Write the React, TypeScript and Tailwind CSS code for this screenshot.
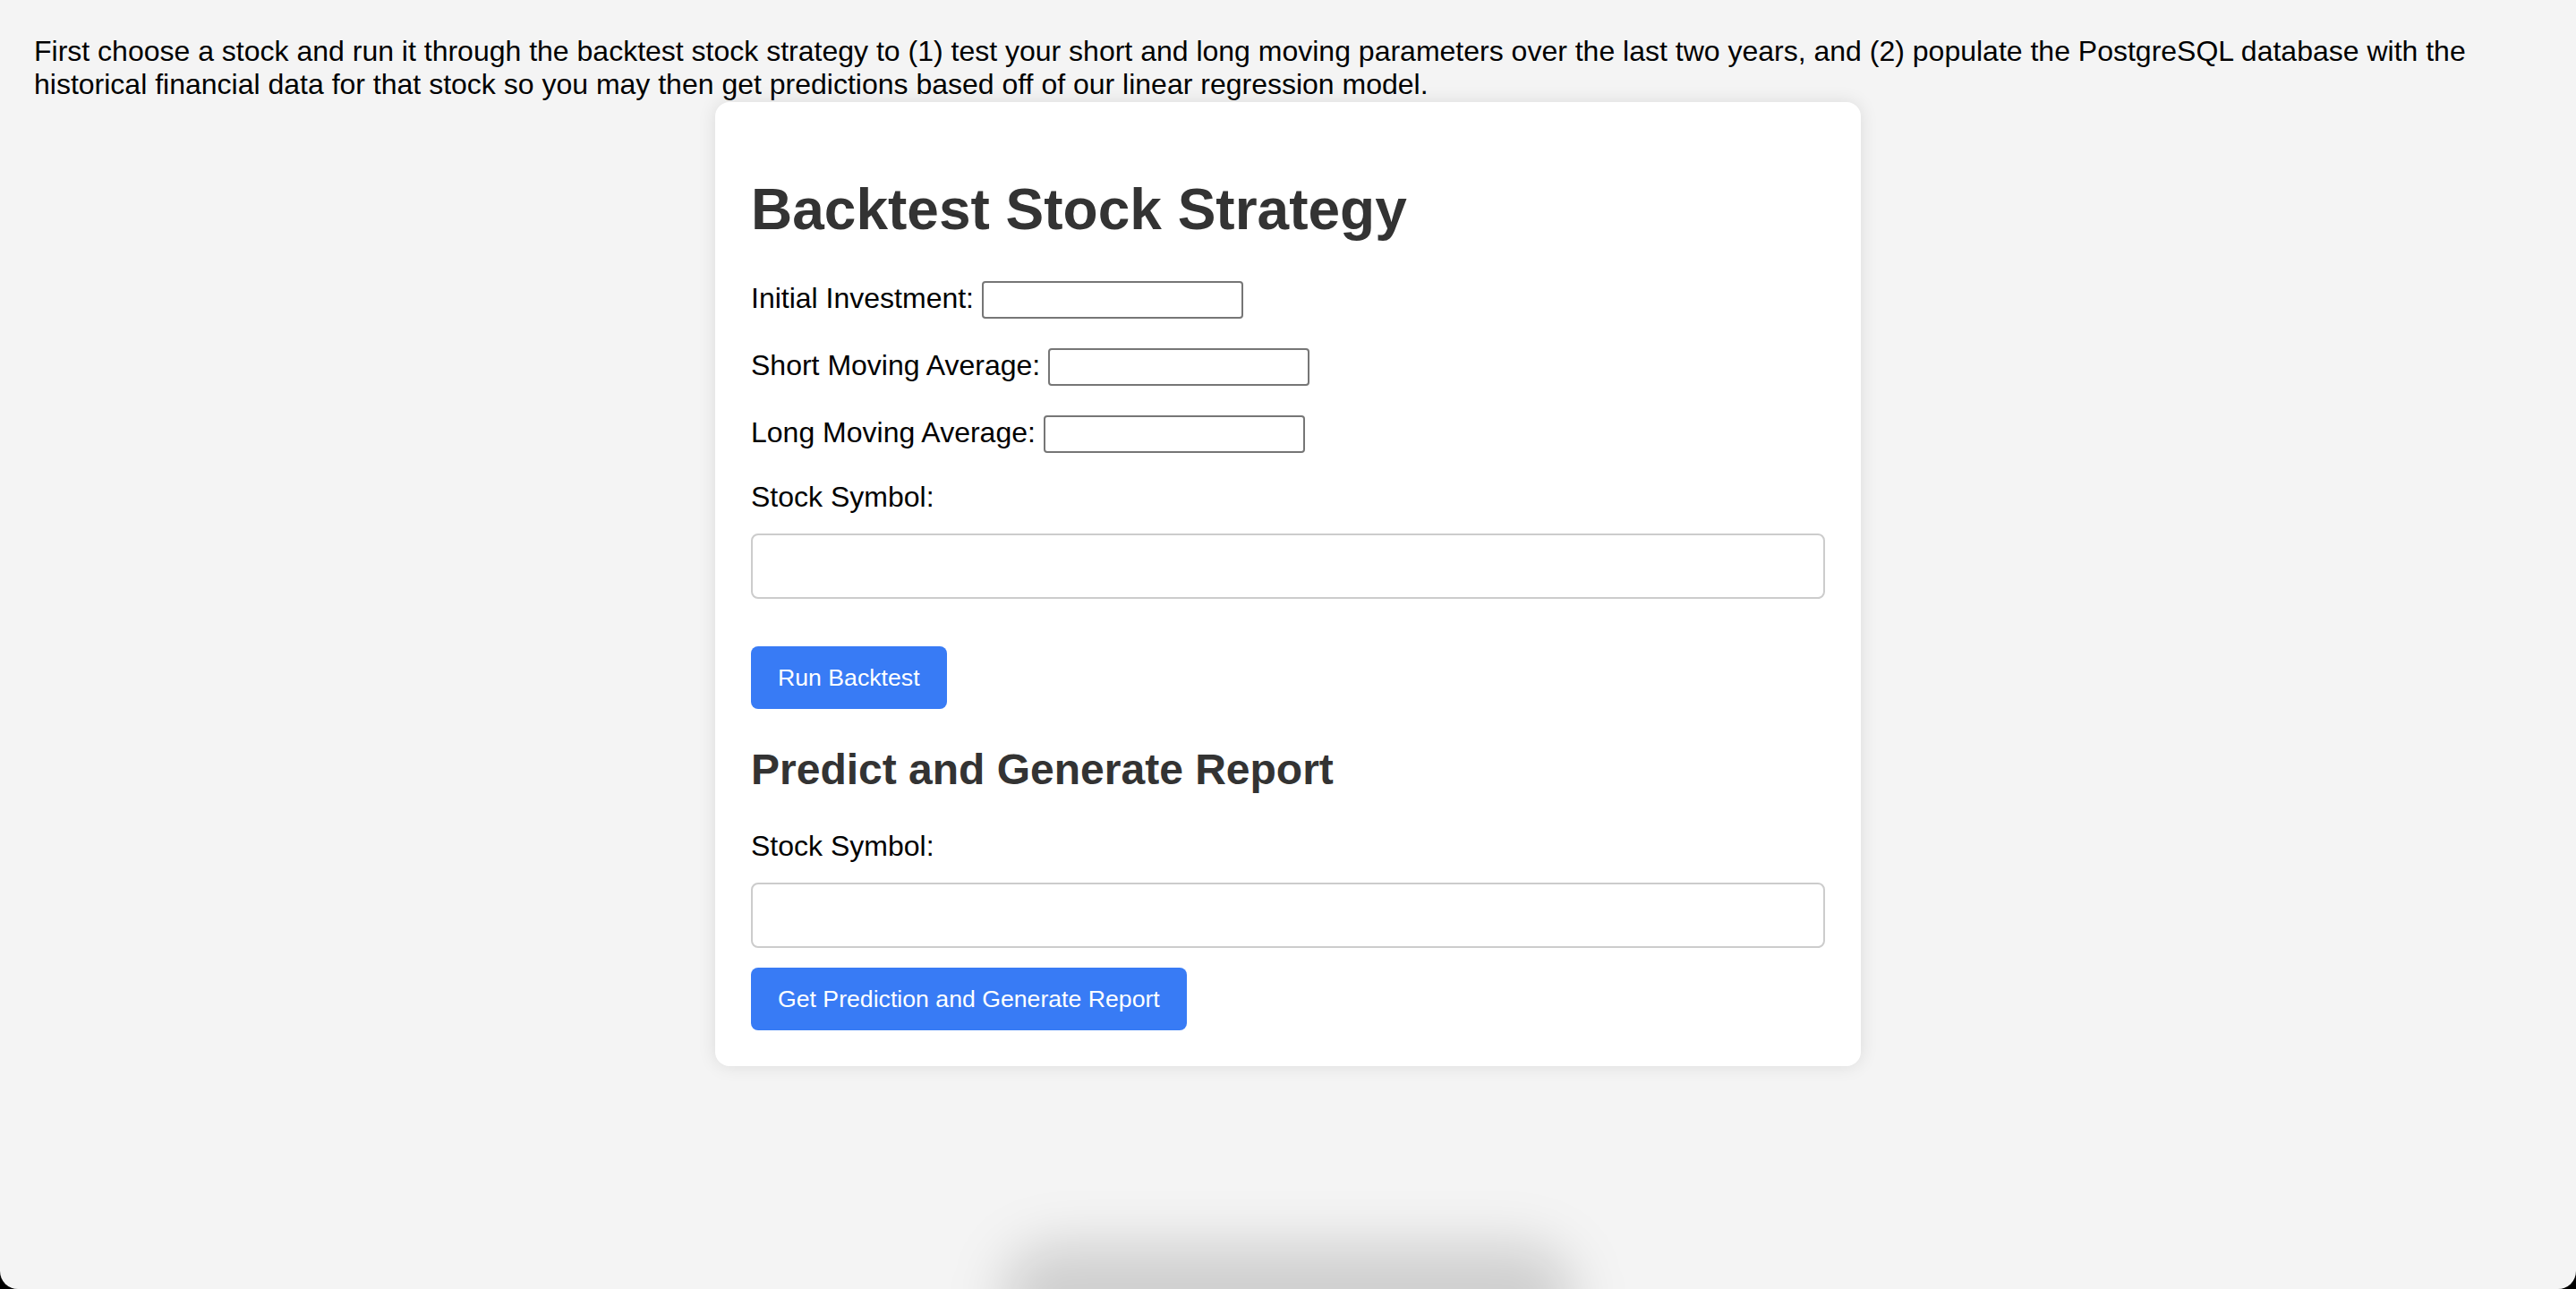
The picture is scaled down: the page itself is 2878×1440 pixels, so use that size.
import React from 'react';

const SmallField: React.FC<{ label: string; className?: string }> = ({ label, className }) => (
  <div className={`flex items-center gap-[9px] h-[42px] ${className ?? ''}`}>
    <label className="text-[32px] leading-[37px] text-black -translate-y-[2px]">{label}</label>
    <input
      type="text"
      className="w-[292px] h-[42px] border-2 border-[#767676] rounded-[4px] bg-white px-[4px] text-[26px] outline-none"
    />
  </div>
);

const BlueButton: React.FC<{ children: React.ReactNode }> = ({ children }) => (
  <button className="h-[70px] px-[30px] rounded-[8px] bg-[#387bf5] text-white text-[26.67px] leading-[30px]">
    {children}
  </button>
);

export default function App() {
  return (
    <div className="bg-black h-[1440px] w-full font-['Liberation_Sans',Arial,sans-serif]">
      <div className="relative h-full w-full bg-[#f4f4f4] rounded-b-[20px] overflow-hidden">
        <p className="pt-[39px] px-[38px] text-[32px] leading-[37px] text-black">
          First choose a stock and run it through the backtest stock strategy to (1) test your short and long moving
          parameters over the last two years, and (2) populate the PostgreSQL database with the historical financial data
          for that stock so you may then get predictions based off of our linear regression model.
        </p>

        <div className="mx-auto mt-[1px] w-[1280px] bg-white rounded-[16px] shadow-[0_0_20px_rgba(0,0,0,0.1)] px-[40px] pt-[40px] pb-[40px]">
          {/* Backtest form */}
          <h1 className="mt-[43px] mb-[43px] text-[64px] leading-[74px] font-bold text-[#333]">Backtest Stock Strategy</h1>

          <SmallField label="Initial Investment:" className="mb-[33px]" />
          <SmallField label="Short Moving Average:" className="mb-[33px]" />
          <SmallField label="Long Moving Average:" className="mb-[31px]" />

          <label className="block mb-[22px] text-[32px] leading-[37px] text-black">Stock Symbol:</label>
          <input
            type="text"
            className="block w-full h-[73px] mb-[53px] border-2 border-[#ccc] rounded-[8px] bg-white px-[16px] text-[32px] outline-none"
          />
          <BlueButton>Run Backtest</BlueButton>

          {/* Prediction */}
          <h2 className="mt-[40px] mb-[40px] text-[48px] leading-[55px] font-bold text-[#333]">Predict and Generate Report</h2>
          <label className="block mb-[22px] text-[32px] leading-[37px] text-black">Stock Symbol:</label>
          <input
            type="text"
            className="block w-full h-[73px] mb-[22px] border-2 border-[#ccc] rounded-[8px] bg-white px-[16px] text-[32px] outline-none"
          />
          <BlueButton>Get Prediction and Generate Report</BlueButton>
        </div>

        {/* soft blurred shadow at bottom edge */}
        <div className="absolute left-1/2 -translate-x-1/2 bottom-[-70px] w-[640px] h-[120px] rounded-full bg-black/15 blur-[30px]" />
      </div>
    </div>
  );
}
